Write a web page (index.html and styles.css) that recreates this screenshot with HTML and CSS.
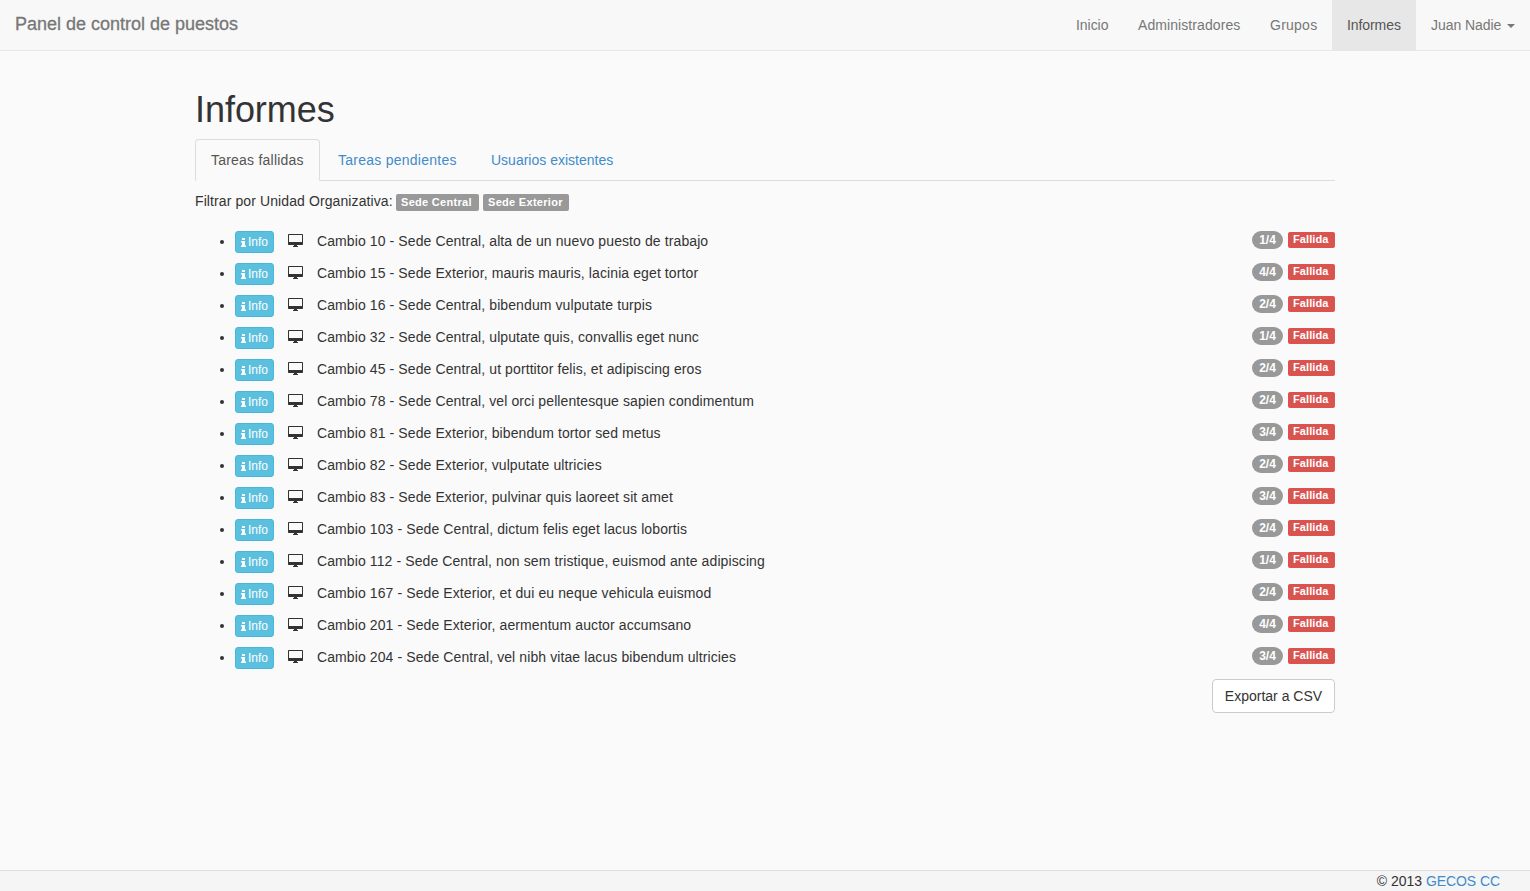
FILE: index.html
```html
<!DOCTYPE html>
<html lang="es">
<head>
<meta charset="utf-8">
<title>Informes</title>
<link rel="stylesheet" href="styles.css">
</head>
<body>
<svg class="defs" width="0" height="0">
  <symbol id="desktop" viewBox="0 0 15 13"><path fill-rule="evenodd" d="M.7 0H14.3Q15 0 15 .7V10.3Q15 11 14.3 11H9V12H10V13H5V12H6V11H.7Q0 11 0 10.3V.7Q0 0 .7 0ZM1 1V8H14V1Z"/></symbol>
  <symbol id="info" viewBox="0 0 5 9"><path d="M1 0H4V2H1ZM0 3H4V7.5H5V9H0V7.5H1V4.5H0Z"/></symbol>
</svg>
<nav class="navbar">
  <a class="brand">Panel de control de puestos</a>
  <div class="nav">
    <a class="inicio">Inicio</a><a class="admin">Administradores</a><a class="grupos">Grupos</a><a class="active">Informes</a><a class="user">Juan Nadie<span class="caret"></span></a>
  </div>
</nav>
<main class="container">
  <h1>Informes</h1>
  <div class="tabs"><a class="active">Tareas fallidas</a><a class="pending">Tareas pendientes</a><a class="users">Usuarios existentes</a></div>
  <p class="filter"><span class="filter-text">Filtrar por Unidad Organizativa:</span><span class="label central">Sede Central</span><span class="label exterior">Sede Exterior</span></p>
  <ul class="tasks" id="tasks"></ul>
  <div class="actions"><button class="export">Exportar a CSV</button></div>
</main>
<footer class="footer">© 2013&nbsp;<a>GECOS CC</a></footer>
<script src="app.js"></script>
</body>
</html>
```
FILE: app.js
```js
const tasks = [
  ['Cambio 10 - Sede Central, alta de un nuevo puesto de trabajo', '1/4'],
  ['Cambio 15 - Sede Exterior, mauris mauris, lacinia eget tortor', '4/4'],
  ['Cambio 16 - Sede Central, bibendum vulputate turpis', '2/4'],
  ['Cambio 32 - Sede Central, ulputate quis, convallis eget nunc', '1/4'],
  ['Cambio 45 - Sede Central, ut porttitor felis, et adipiscing eros', '2/4'],
  ['Cambio 78 - Sede Central, vel orci pellentesque sapien condimentum', '2/4'],
  ['Cambio 81 - Sede Exterior, bibendum tortor sed metus', '3/4'],
  ['Cambio 82 - Sede Exterior, vulputate ultricies', '2/4'],
  ['Cambio 83 - Sede Exterior, pulvinar quis laoreet sit amet', '3/4'],
  ['Cambio 103 - Sede Central, dictum felis eget lacus lobortis', '2/4'],
  ['Cambio 112 - Sede Central, non sem tristique, euismod ante adipiscing', '1/4'],
  ['Cambio 167 - Sede Exterior, et dui eu neque vehicula euismod', '2/4'],
  ['Cambio 201 - Sede Exterior, aermentum auctor accumsano', '4/4'],
  ['Cambio 204 - Sede Central, vel nibh vitae lacus bibendum ultricies', '3/4']
];
document.getElementById('tasks').innerHTML = tasks.map(([text, count]) =>
  `<li><span class="info"><svg><use href="#info"/></svg><span>Info</span></span><svg class="desktop"><use href="#desktop"/></svg><span class="text">${text}</span><span class="badge">${count}</span><span class="label failed">Fallida</span></li>`
).join('');
```
FILE: styles.css
```css
* { box-sizing: border-box; }
body { margin: 0; height: 891px; display: flex; flex-direction: column; overflow: hidden; background: #fafafa; color: #333; font: 14px/20px "Liberation Sans", Arial, sans-serif; letter-spacing: .1px; }
.defs { position: absolute; }
.navbar { height: 51px; flex: none; display: flex; justify-content: space-between; background: #f8f8f8; border-bottom: 1px solid #e7e7e7; color: #777; }
.brand { padding: 14px 15px; font-size: 18px; letter-spacing: -.01px; white-space: nowrap; -webkit-text-stroke: .3px #777; }
.nav { display: flex; white-space: nowrap; }
.nav a { padding: 15px; height: 50px; }
.nav .inicio { width: 62px; letter-spacing: -.05px; }
.nav .admin { width: 132px; letter-spacing: .08px; }
.nav .grupos { width: 77px; letter-spacing: .25px; }
.nav .active { width: 84px; background: #e7e7e7; color: #555; letter-spacing: -.08px; }
.nav .user { width: 114px; letter-spacing: -.05px; display: flex; align-items: flex-start; justify-content: space-between; }
.caret { margin-top: 9px; border: 4px solid transparent; border-top-color: #777; border-bottom: 0; }
.container { width: 1140px; margin: 0 auto; padding-top: 39px; flex: 1; }
h1 { margin: 0; height: 49px; font-size: 36px; line-height: 40px; font-weight: 400; letter-spacing: -.05px; }
.tabs { display: flex; height: 42px; border-bottom: 1px solid #ddd; color: #428bca; white-space: nowrap; }
.tabs a { height: 42px; padding: 10px 15px; border: 1px solid transparent; margin-right: 2px; }
.tabs .active { width: 125px; color: #555; background: #fafafa; border-color: #ddd; border-bottom-color: #fafafa; border-radius: 4px 4px 0 0; letter-spacing: .22px; }
.tabs .pending { width: 151px; letter-spacing: .25px; }
.tabs .users { letter-spacing: 0; }
.filter { display: flex; margin: 10px 0 0; height: 21px; }
.filter-text { width: 201px; white-space: nowrap; }
.label { height: 17px; margin-top: 3px; padding: 0 5px; border-radius: 2px; background: #999; color: #fff; font-size: 11px; line-height: 16px; font-weight: 700; letter-spacing: .3px; white-space: nowrap; }
.central { width: 83px; margin-right: 4px; }
.exterior { width: 86px; }
.tasks { margin: 18px 0 0; padding: 0 0 0 40px; list-style: none; }
.tasks li { height: 32px; display: flex; }
.tasks li::before { content: ""; width: 4px; height: 4px; margin: 10px 11px 0 -15px; border-radius: 50%; background: #333; }
.info { width: 39px; height: 22px; margin-top: 1px; padding: 0 5px; display: flex; align-items: flex-start; gap: 2px; border: 1px solid #46b8da; border-radius: 3px; background: #5bc0de; color: #fff; font-size: 12px; line-height: 20px; letter-spacing: 0; }
.info svg { width: 5px; height: 9px; margin-top: 6px; fill: #fff; }
.desktop { width: 15px; height: 13px; margin: 4px 14px 0; fill: #333; }
.text { padding-top: 1px; flex: 1; white-space: nowrap; }
.badge { width: 31px; height: 18px; margin: 1px 5px 0 0; border-radius: 9px; background: #999; color: #fff; font-size: 12px; font-weight: 700; line-height: 18px; text-align: center; letter-spacing: 0; }
.failed { width: 47px; height: 16px; margin-top: 2px; background: #d9534f; line-height: 15px; letter-spacing: .1px; }
.actions { display: flex; justify-content: flex-end; margin-top: 1px; }
.export { width: 123px; height: 34px; padding: 0; border: 1px solid #ccc; border-radius: 4px; background: #fff; color: #333; font: inherit; letter-spacing: 0; white-space: nowrap; }
.footer { height: 21px; flex: none; padding: 0 30px; border-top: 1px solid #ddd; background: #f5f5f5; text-align: right; letter-spacing: 0; }
.footer a { color: #428bca; letter-spacing: -.08px; }
```
